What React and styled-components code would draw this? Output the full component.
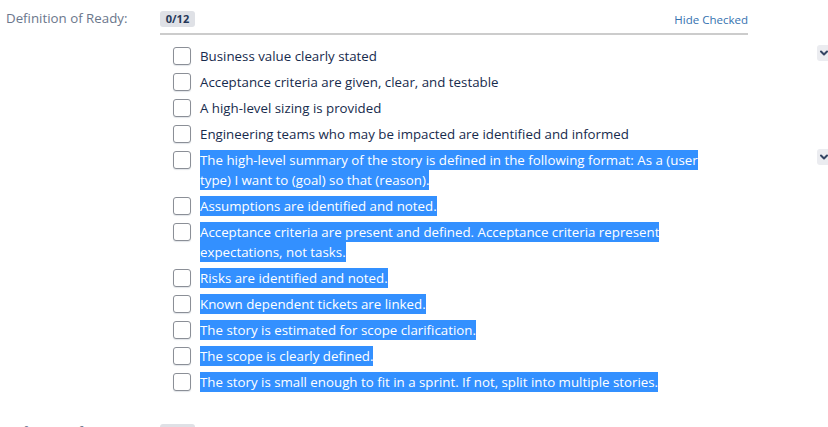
import React from "react";
import styled, { createGlobalStyle } from "styled-components";

const Global = createGlobalStyle`
  html, body { margin: 0; padding: 0; background: #fff; overflow: hidden; }
  body { font-family: "Open Sans", "Noto Sans", sans-serif; color: #172b4d; }
`;

const Page = styled.div`
  position: relative;
  width: 828px;
  height: 427px;
  overflow: hidden;
`;

const Section = styled.section`
  display: grid;
  grid-template-columns: 160px 588px;
  margin-bottom: ${(p) => p.$gap || 0}px;
`;

const Label = styled.div`
  padding: 8px 0 0 6px;
  font-size: 13.3px;
  line-height: 20px;
  color: #6b778c;
`;

const Content = styled.div`
  display: flex;
  flex-direction: column;
`;

const Header = styled.div`
  display: flex;
  align-items: center;
  justify-content: space-between;
  padding: 10px 0 5px;
  border-bottom: 2px solid #cccccc;
`;

const Badge = styled.span`
  display: inline-flex;
  align-items: center;
  justify-content: center;
  width: 35px;
  height: 16px;
  border-radius: 3px;
  background: #dfe1e6;
  color: #253858;
  font-size: 11px;
  font-weight: 700;
  line-height: 16px;
`;

const Link = styled.a`
  font-size: 11.5px;
  line-height: 16px;
  color: #3572b0;
  text-decoration: none;
  cursor: pointer;
  margin-top: 2px;
`;

const List = styled.ul`
  list-style: none;
  margin: 0;
  padding: 8px 23px 0 13px;
  display: flex;
  flex-direction: column;
`;

const Row = styled.li`
  position: relative;
  display: flex;
  align-items: flex-start;
  gap: 9px;
  padding: 3px 0;
`;

const Box = styled.span`
  flex: none;
  box-sizing: border-box;
  width: 18px;
  height: 18px;
  margin-top: 1px;
  border: 1px solid #8b8f97;
  border-radius: 3px;
  background: #fff;
  box-shadow: 0 1px 1px rgba(9, 30, 66, 0.12);
`;

const Text = styled.span`
  font-size: 13.3px;
  line-height: 20px;
  color: #172b4d;
`;

const Hl = styled.span`
  ${(p) =>
    p.$selected &&
    `
    background: #3390ff;
    color: #ffffff;
    padding: 1px 0;
  `}
`;

const Toggle = styled.button`
  position: absolute;
  left: 644px;
  top: 2px;
  width: 16px;
  height: 16px;
  padding: 0 0 0 2px;
  border: 0;
  border-radius: 3px;
  background: #ebecf0;
  display: flex;
  align-items: center;
  cursor: pointer;
`;

const Chevron = () => (
  <svg width="10" height="10" viewBox="0 0 10 10">
    <path d="M2 3.5 L5 6.5 L8 3.5" fill="none" stroke="#344563" strokeWidth="2" strokeLinecap="round" strokeLinejoin="round" />
  </svg>
);

const items = [
  { t: "Business value clearly stated", toggle: true },
  { t: "Acceptance criteria are given, clear, and testable" },
  { t: "A high-level sizing is provided" },
  { t: "Engineering teams who may be impacted are identified and informed" },
  { t: "The high-level summary of the story is defined in the following format: As a (user type) I want to (goal) so that (reason).", sel: true, toggle: true },
  { t: "Assumptions are identified and noted.", sel: true },
  { t: "Acceptance criteria are present and defined. Acceptance criteria represent expectations, not tasks.", sel: true },
  { t: "Risks are identified and noted.", sel: true },
  { t: "Known dependent tickets are linked.", sel: true },
  { t: "The story is estimated for scope clarification.", sel: true },
  { t: "The scope is clearly defined.", sel: true },
  { t: "The story is small enough to fit in a sprint. If not, split into multiple stories.", sel: true },
];

export default function App() {
  return (
    <>
      <Global />
      <Page>
        <Section $gap={18}>
          <Label>Definition of Ready:</Label>
          <Content>
            <Header>
              <Badge>0/12</Badge>
              <Link>Hide Checked</Link>
            </Header>
            <List>
              {items.map((it, i) => (
                <Row key={i}>
                  <Box />
                  <Text>
                    <Hl $selected={it.sel}>{it.t}</Hl>
                  </Text>
                  {it.toggle && (
                    <Toggle aria-label="Expand">
                      <Chevron />
                    </Toggle>
                  )}
                </Row>
              ))}
            </List>
          </Content>
        </Section>
        <Section>
          <Label>Definition of Done:</Label>
          <Content>
            <Header>
              <Badge>0/8</Badge>
              <Link>Hide Checked</Link>
            </Header>
          </Content>
        </Section>
      </Page>
    </>
  );
}
